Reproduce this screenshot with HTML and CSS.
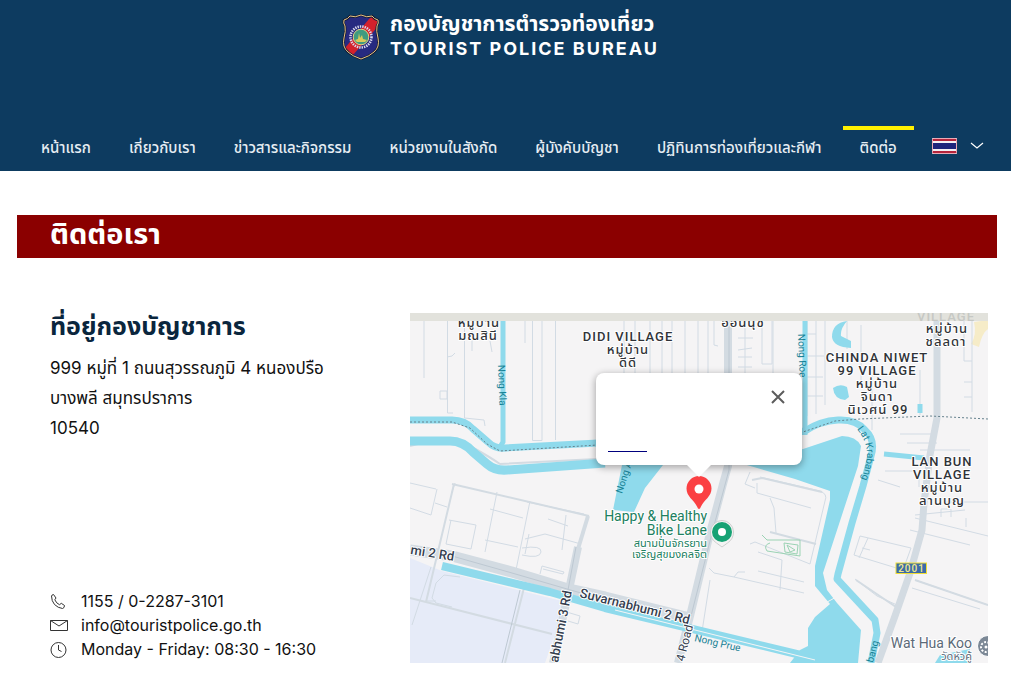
FILE: index.html
```html
<!DOCTYPE html>
<html lang="th">
<head>
<meta charset="utf-8">
<meta name="viewport" content="width=device-width, initial-scale=1">
<title>ติดต่อเรา</title>
<link rel="stylesheet" href="styles.css">
</head>
<body>
<header class="site-header">
  <a class="brand" href="#">
    <svg class="brand-logo" viewBox="0 0 38 46" aria-hidden="true">
      <defs><clipPath id="shield"><path d="M8 2Q13 4 19 1Q25 4 30 2Q32 5 36 6Q37 9 35 12Q34 17 36 24Q38 33 32 38Q28 42 19 45Q10 42 6 38Q0 33 2 24Q4 17 3 12Q1 9 2 6Q6 5 8 2Z"/></clipPath></defs>
      <g clip-path="url(#shield)"><path fill="#272a80" d="M0 0h38v46H0z"/><path fill="#d3212c" d="M27 5L33 0 38 10 11 41 5 43 3 34z"/></g>
      <path fill="none" stroke="#151b35" stroke-width="2.4" d="M8 2Q13 4 19 1Q25 4 30 2Q32 5 36 6Q37 9 35 12Q34 17 36 24Q38 33 32 38Q28 42 19 45Q10 42 6 38Q0 33 2 24Q4 17 3 12Q1 9 2 6Q6 5 8 2Z"/>
      <path fill="none" stroke="#e6c582" stroke-width="1" d="M8 2Q13 4 19 1Q25 4 30 2Q32 5 36 6Q37 9 35 12Q34 17 36 24Q38 33 32 38Q28 42 19 45Q10 42 6 38Q0 33 2 24Q4 17 3 12Q1 9 2 6Q6 5 8 2Z"/>
      <circle cx="19" cy="23" r="10.5" fill="none" stroke="#dcd9ee" stroke-width="2.6" stroke-dasharray="1.4 1"/>
      <circle cx="19" cy="23" r="7.8" fill="#3f9b80" stroke="#e3cf83"/>
      <path fill="#d9c95a" d="M13 26l3-1 1-6 1 5 2-3 1 4 4 1-2 2h-8z"/>
    </svg>
    <span class="brand-text"><span class="brand-th">กองบัญชาการตำรวจท่องเที่ยว</span><span class="brand-en">TOURIST POLICE BUREAU</span></span>
  </a>
  <nav class="main-nav">
    <a href="#">หน้าแรก</a>
    <a href="#">เกี่ยวกับเรา</a>
    <a href="#">ข่าวสารและกิจกรรม</a>
    <a href="#">หน่วยงานในสังกัด</a>
    <a href="#">ผู้บังคับบัญชา</a>
    <a href="#">ปฏิทินการท่องเที่ยวและกีฬา</a>
    <a class="active" href="#">ติดต่อ</a>
    <button class="lang" type="button" aria-label="ภาษาไทย">
      <svg class="flag" viewBox="0 0 25 16" aria-hidden="true"><rect width="25" height="16" rx="1" fill="#f4f0f3"/><path fill="#b5243b" d="M0 1h25v2H0zM0 13h25v2H0z"/><path fill="#1e247b" d="M0 5h25v6H0z"/><rect x=".5" y=".5" width="24" height="15" rx="1" fill="none" stroke="#eba9b4"/></svg>
      <svg class="chevron" viewBox="0 0 14 8" aria-hidden="true"><path d="M1 1l6 5 6-5" fill="none" stroke="#fff" stroke-width="1.2"/></svg>
    </button>
  </nav>
</header>
<main>
  <h1 class="page-title">ติดต่อเรา</h1>
  <section class="contact">
    <div class="details">
      <div>
        <h2>ที่อยู่กองบัญชาการ</h2>
        <address>999 หมู่ที่ 1 ถนนสุวรรณภูมิ 4 หนองปรือ<br>บางพลี สมุทรปราการ<br>10540</address>
      </div>
      <ul class="channels">
        <li><svg viewBox="0 0 18 18" aria-hidden="true"><path d="M1.500 4Q1.500 3 3.500 2.500L6 6 4.800 7.800Q6.500 11.500 9.500 12.700L11.300 11.300 14.500 13.500Q14.500 16 12.500 16.500 8 16 4.500 12.500 1.500 9 1.500 4Z"/></svg>1155 / 0-2287-3101</li>
        <li><svg viewBox="0 0 18 18" aria-hidden="true"><path d="M.5 4.500h17v10H.5zM.5 4.500L9 10 17.500 4.500"/></svg>info@touristpolice.go.th</li>
        <li><svg viewBox="0 0 18 18" aria-hidden="true"><circle cx="8.500" cy="10" r="7.500"/><path d="M8.500 5v5l3 1.500"/></svg>Monday - Friday: 08:30 - 16:30</li>
      </ul>
    </div>
    <div class="map">
      <svg class="map-canvas" viewBox="410 313 578 350" preserveAspectRatio="xMidYMid slice" role="img" aria-label="แผนที่">
        <defs><path id="lat-krabang" d="M857 429Q867 441 867 455Q866 468 860 484"/></defs>
        <path fill="#f5f4f5" d="M410 313h578v350H410z"/>
        <path fill="#e6ebf8" d="M410 558L442 571 566 602 545 663H410z"/>
        <path fill="#f6ecc8" d="M988 320L974 322Q977 335 971 344L979 347Q982 333 988 329z"/>
        <g class="minor">
          <path d="M424 321V378M447.500 321V413H453M464.500 321V418L484 420 485 426M440 391h7v8h-7zM472 321V351M525 321V343M532.500 321V440.500H542V321M555.500 321V440M447 357l5-1 3-3M490 341l2 11M624 321V373M635 321V373M650 321V373M662 321V373M672 321V373M685 321V373M698 321V373M708 321V373M714 321V345l4 1M745 321V373M738 338h15M738 350l14-2M738 357h14M738 367h14M762 321V364h10V321M773 321V373"/>
          <path d="M807 321V416M816 321V414M825 321V405M807 334h9M807 356h17M807 377h16M807 396h16M847 321V349M861 325V383M872 365V430M920 370V415M964 321V361M972 321V412M964 361h8M964 382h8M964 397h8M900 434h32M920 450h50M907 443h30M919 475v12M885 471h28M878 480l22 7"/>
          <path d="M410 483l26 6M452 492l3-9M410 508l21 7 6-26M435 503l12 4M449 520l27 5-5 24-25-5 5-24M497 492l-12 60M490 509l33 9M530 501l-14 69M485 540l33 7M527 502l57 12M548 519l20 7M525 539l20-5 36 10M529 534l-4 20M566 515l-4 35M540 574l2-8 22 6-1 2-20-5M431 567l-19 58M460 577l-16-2-8 8-4 15 4 5 16 4M426 601h10M522 548q20-3 19 4t-19 3M560 610l20 6-2 8-10-3"/>
          <path d="M750 472l-5 12 10 4M760 477l60 14q8 3 5 10l-15 63-55-22-5 2M757 483v10l54 15M770 498l4 10 2 25M709 568l5 5 20 4 70 16M734 577l4-5h7M758 571l46 11M758 552l24 8-2 30M860 536l51 12-8 22-49-15zM868 538l-9 20M862 548l8 2M915 515l50-5M915 518l73 18M923 518v19M910 530l60 15M941 517v-8h10v8M966 518v9M915 580l73 25M912 588l68 21M855 579l22 17 20 9M710 580l-9 58M945 502h43"/>
        </g>
        <g class="road">
          <path stroke-width="2" d="M410 446Q450 435 470 446T500 464L596 459M452 484l137 32M410 598l142 36M526 580l-21 83M454 484l-28 118M770 532l46 12M752 480l10-2 60 14M856 580l40 27M915 580l73 25"/>
          <path stroke-width="11" d="M410 550L452 556 512 572 568 589 605 597 690 618"/>
          <path stroke-width="4" d="M588 516L578 549"/>
          <path stroke-width="8" d="M728 321V466L723 484 710 533 690 616 678 663M578 547L570 585 553 663"/>
          <path stroke-width="7" d="M937 321V418L930 455 924 503 922 530 910 573 895 616 878 663"/>
        </g>
        <g class="road-center"><path d="M452 556L512 573 605 600M729 321V470L712 533 691 616M576 547L568 590M520 590L502 663"/></g>
        <g class="water">
          <path stroke-width="5" d="M503 321V442L500 447M805 321V435"/>
          <path stroke-width="7" d="M410 420L452 420Q465 420 473 429L488 442Q495 449 505 448L598 443 760 438 805 431Q820 421 838 420 856 419 865 430 876 440 871 456L863 486 852 523 838 574 837 579 875 620 877 633 871 663"/>
          <path stroke-width="9" d="M410 441H450Q463 441 473 452L487 464Q495 471 507 470L605 463"/>
          <path stroke-width="8" d="M442 566L550 592 605 608 805 656 815 661"/>
          <path stroke-width="5" d="M884 454L924 458M920 413V404"/>
        </g>
        <g class="lake">
          <path d="M740 463L803 449 842 436Q856 436 861 446L858 466 823 573 827 590 837 603 861 630 858 663H790L800 650 808 646V628L815 617 830 604 815 586V566L830 500V491L795 479z"/>
          <path d="M622 465H663L645 488 634 512 613 510z"/>
          <path d="M847 321Q832 323 832 337 833 347 851 348V341L841 336Q840 329 847 321M833 388q7-5 14-1l2 10-4 3q-11-1-12-12M940 655l30-6v14h-35z"/>
        </g>
        <path class="canal-line" d="M410 422L452 422 470 428 487 444 500 451 598 445 760 439 803 432 835 421 860 419 930 416 988 419"/>
        <path fill="none" stroke="#f5f4f5" d="M615 610L815 660M820 606l18-10"/>
        <path class="park" d="M762 535l5 5h33v16l-33-5q-4-6 3-8M784 543l14 2-1 9-12-2zM787 545l8 5-5 2z"/>
        <path fill="#e2e2dc" d="M410 313h578v8H410z"/>
        <g class="place">
          <text x="479" y="327">หมู่บ้าน</text><text x="478" y="340">มณสินี</text>
          <text x="628" y="341">DIDI VILLAGE</text><text x="628" y="354">หมู่บ้าน</text><text x="628" y="367">ดีดี</text>
          <text x="743" y="327">อ่อนนุช</text>
          <text x="947" y="333">หมู่บ้าน</text><text x="946" y="346">ชลลดา</text>
          <text x="877" y="362">CHINDA NIWET</text><text x="877" y="375">99 VILLAGE</text><text x="877" y="388">หมู่บ้าน</text><text x="877" y="401">จินดา</text><text x="878" y="414">นิเวศน์ 99</text>
          <text x="942" y="466">LAN BUN</text><text x="942" y="479">VILLAGE</text><text x="942" y="492">หมู่บ้าน</text><text x="942" y="505">ลานบุญ</text>
        </g>
        <path fill="#e2e2dc" d="M410 313h100v8H410zM700 313h80v8H700z"/>
        <text class="place faded" x="946" y="321">VILLAGE</text>
        <g class="water-name">
          <text transform="translate(498 365) rotate(88)">Nong Kla</text>
          <text transform="translate(798 334) rotate(88)">Nong Roe</text>
          <text transform="translate(622 494) rotate(-72)">Nong A</text>
          <text><textPath href="#lat-krabang">Lat Krabang</textPath></text>
          <text transform="translate(873 663) rotate(-75)">bang</text>
          <text transform="translate(694 641) rotate(13)">Nong Prue</text>
        </g>
        <g class="road-name">
          <text transform="translate(410 554) rotate(9)">mi 2 Rd</text>
          <text transform="translate(579 597) rotate(14)">Suvarnabhumi 2 Rd</text>
          <text transform="translate(558 663) rotate(-79)">abhumi 3 Rd</text>
          <text class="small-road" transform="translate(684 662) rotate(-76)">4 Road</text>
        </g>
        <g class="poi green"><text x="707" y="521">Happy &amp; Healthy</text><text x="707" y="535">Bike Lane</text><text class="poi-th" x="707" y="547">สนามปั่นจักรยาน</text><text class="poi-th" x="707" y="558">เจริญสุขมงคลจิต</text></g>
        <g class="poi grey"><text x="972" y="648">Wat Hua Koo</text><text class="poi-th" x="972" y="660">วัดหัวคู้</text></g>
        <circle cx="988" cy="646" r="10.500" fill="#7c8896" stroke="#fff"/><circle cx="986" cy="647" r="5" fill="none" stroke="#fff" stroke-width="2" stroke-dasharray="2 1.500"/><circle cx="986" cy="647" r="1.500" fill="#fff"/>
        <path fill="#f4f4f4" stroke="#c4c4c4" stroke-width=".8" d="M710.500 532a11.500 11.500 0 1 1 23 0q0 7-6 11l-5.500 4-5.500-4q-6-4-6-11z"/><circle cx="722" cy="532" r="10" fill="#17a274"/><circle cx="722" cy="532" r="4" fill="#fff"/>
        <rect x="896" y="563" width="30.500" height="10.500" fill="#3c6ca8" stroke="#f0dd35"/><text class="shield-no" x="911.500" y="572">2001</text>
        <path fill="#fb4043" d="M699 476a12.500 12.500 0 0 1 12.500 12.500c0 8-7 11-10.500 18q-2 5-4 0c-3.500-7-10.500-10-10.500-18A12.500 12.500 0 0 1 699 476z"/><circle cx="699" cy="489" r="4.500" fill="#fff"/>
      </svg>
      <div class="info-window">
        <button class="close" type="button" aria-label="ปิด"><svg viewBox="0 0 14 14" aria-hidden="true"><path d="M1 1l12 12M13 1L1 13" stroke="#5c5c5c" stroke-width="2"/></svg></button>
        <a class="info-link" href="#" aria-label="ดูใน Google Maps"></a>
      </div>
    </div>
  </section>
</main>
</body>
</html>
```
FILE: styles.css
```css
* { box-sizing: border-box; }
body { margin: 0; background: #fff; color: #111; font-family: Inter, "Noto Sans Thai", "Noto Sans", sans-serif; font-size: 16px; }
a { color: inherit; text-decoration: none; }
button { border: 0; background: none; padding: 0; font: inherit; cursor: pointer; }

.site-header { background: #0d3b60; color: #fff; }
.brand { display: flex; justify-content: center; align-items: center; gap: 10px; height: 74px; padding-right: 10px; }
.brand-logo { width: 38px; height: 46px; }
.brand-text { display: flex; flex-direction: column; padding-bottom: 2px; font-weight: 700; }
.brand-th { font-size: 21px; line-height: 25px; }
.brand-en { font-size: 18px; line-height: 25px; letter-spacing: 2px; }
.main-nav { display: flex; justify-content: space-between; margin-top: 52px; padding: 0 27px 0 24px; font-size: 15px; font-weight: 500; line-height: 36px; color: #e6edf3; white-space: nowrap; }
.main-nav a { padding: 0 17px 5px; border-top: 4px solid transparent; }
.main-nav a.active { border-color: #fff000; }
.lang { display: flex; align-items: center; gap: 13px; height: 40px; margin-left: 14px; }
.flag { width: 25px; height: 16px; }
.chevron { width: 14px; height: 8px; }

main { padding: 44px 14px 24px 17px; }
.page-title { margin: 0; padding: 0 33px 5px; background: #8b0000; color: #fff; font-size: 29px; line-height: 38px; font-weight: 700; }
.contact { display: grid; grid-template-columns: 360fr 578fr; padding: 55px 9px 0 33px; }
.details { display: flex; flex-direction: column; justify-content: space-between; }
h2 { margin: 0; font-size: 25px; line-height: 26px; color: #0a263d; font-weight: 700; }
address { margin-top: 14px; font-size: 17px; font-style: normal; line-height: 30px; }
.channels { list-style: none; margin: 0; padding: 0 0 2px; }
.channels li { display: flex; align-items: center; gap: 13px; line-height: 24px; }
.channels svg { width: 18px; height: 18px; fill: none; stroke: #333; stroke-width: 1; }

.map { position: relative; aspect-ratio: 578 / 350; overflow: hidden; }
.map-canvas { display: block; width: 100%; height: 100%; }
.minor path { fill: none; stroke: #d2dbe4; stroke-width: 1; }
.road path { fill: none; stroke: #d3dbe2; stroke-linejoin: round; }
.road-center path { fill: none; stroke: #bdc8d2; stroke-width: 1; }
.water path { fill: none; stroke: #8fdaec; stroke-linejoin: round; }
.lake path { fill: #8fdaec; }
.canal-line { fill: none; stroke: #66828e; stroke-width: 1; stroke-dasharray: 2 2; }
.park { fill: none; stroke: #9bd3b4; }
.map text { paint-order: stroke; stroke: #fff; stroke-width: 2px; stroke-linejoin: round; font-family: Roboto, "Noto Sans Thai", sans-serif; }
.place text, .map .place { font-size: 13px; font-weight: 500; letter-spacing: 1px; text-anchor: middle; fill: #303338; }
.map .faded { fill: #c6c8c4; stroke: none; }
.map .water-name text { font-size: 10px; fill: #178295; stroke: none; }
.road-name text { font-size: 13px; font-weight: 500; fill: #35404f; }
.road-name .small-road { font-size: 12px; font-weight: 400; }
.poi text { font-size: 14px; text-anchor: end; }
.poi .poi-th { font-size: 11px; }
.green { fill: #208060; }
.grey { fill: #5c6a78; }
.map .shield-no { font-size: 10px; font-weight: 500; fill: #f3e98b; stroke: none; text-anchor: middle; letter-spacing: 1px; }

.info-window { position: absolute; left: 50%; bottom: calc(50% + 23px); width: 206px; height: 92px; margin-left: -103px; background: #fff; border-radius: 8px; box-shadow: 0 2px 7px 1px rgba(0, 0, 0, .3); display: flex; flex-direction: column; justify-content: space-between; padding: 17px 17px 13px 12px; }
.info-window::after { content: ""; position: absolute; top: 100%; left: 50%; margin-left: -12px; border: 12px solid transparent; border-top-color: #fff; border-bottom: 0; }
.close { align-self: flex-end; width: 14px; height: 14px; display: flex; }
.close svg { width: 14px; height: 14px; }
.info-link { width: 39px; height: 16px; border-bottom: 1px solid #00007e; }
```
